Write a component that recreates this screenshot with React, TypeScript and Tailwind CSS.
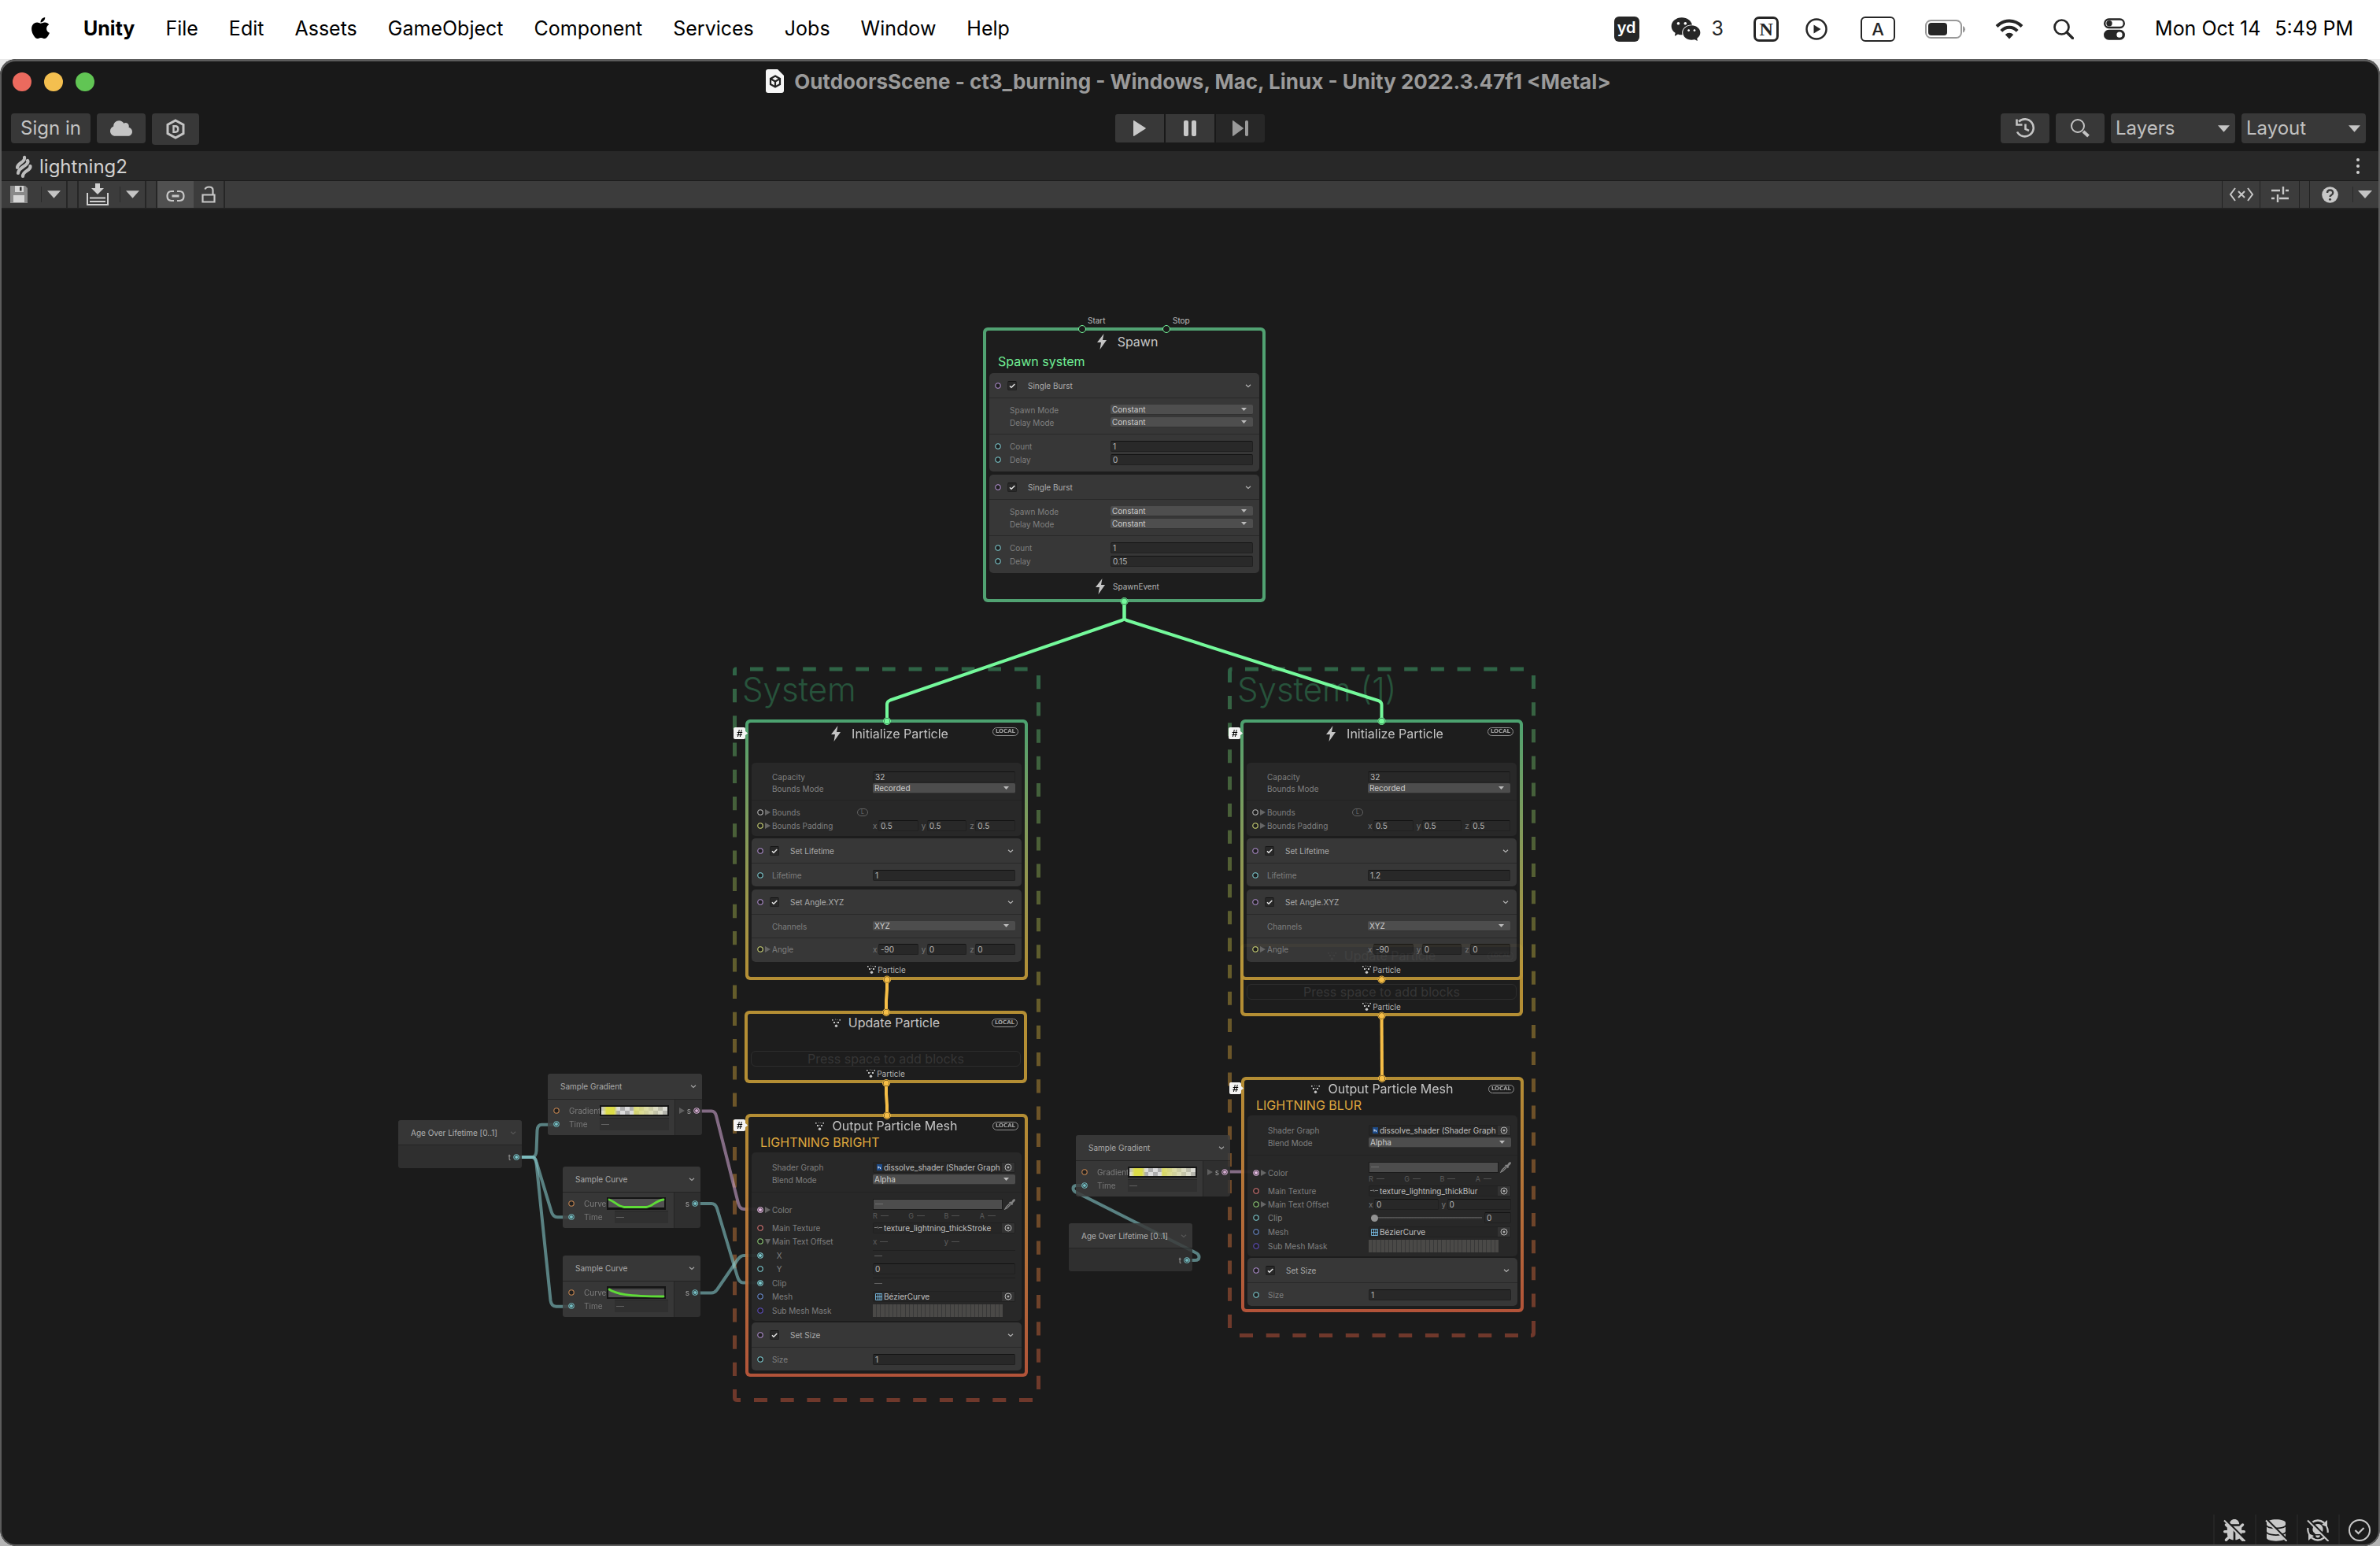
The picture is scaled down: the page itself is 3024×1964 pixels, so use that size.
import React, { useId } from "react";
import { FaApple, FaBug, FaCloud, FaDatabase } from "react-icons/fa";
import { AiFillWechat } from "react-icons/ai";

/* ---------- small drawings ---------- */

const Bolt = () => (
  <svg className="h-5 w-3 shrink-0 fill-[#cfcfcf]" viewBox="0 0 12 20">
    <path d="M8.5 0 0 11h5L3.5 20 12 8H7z" />
  </svg>
);

const Dots = () => (
  <svg className="h-[11px] w-[11px] shrink-0 fill-[#d0d0d0]" viewBox="0 0 11 11">
    <rect x="0" y="1" width="1.6" height="1.6" />
    <rect x="4" y="0.6" width="1" height="1" opacity=".7" />
    <rect x="6.4" y="1" width="1" height="1" opacity=".7" />
    <rect x="9.4" y="1" width="1.6" height="1.6" />
    <rect x="2" y="4" width="2" height="2" />
    <rect x="7" y="4" width="2" height="2" />
    <rect x="5" y="4" width="1" height="1" opacity=".6" />
    <circle cx="5.5" cy="9.2" r="1.7" />
  </svg>
);

const Chevron = ({ dim = false }: { dim?: boolean }) => (
  <svg className="h-2 w-2 shrink-0" viewBox="0 0 8 8" fill="none" stroke={dim ? "#626262" : "#bdbdbd"} strokeWidth="1.2">
    <path d="M1 2.8 4 5.4 7 2.8" />
  </svg>
);

const Fold = ({ open = false }: { open?: boolean }) => (
  <svg className="h-[8px] w-[7px] shrink-0 fill-[#6b6b6b]" viewBox="0 0 7 8">
    <path d={open ? "M0 1h7L3.5 8z" : "M0 0v8l7-4z"} />
  </svg>
);

const DownArrow = ({ className = "" }: { className?: string }) => (
  <svg className={"fill-[#c4c4c4] " + className} viewBox="0 0 16 9">
    <path d="M0 0h16L8 9z" />
  </svg>
);

const Port = ({ color, on = false }: { color: string; on?: boolean }) => (
  <svg className="h-[8px] w-[8px] shrink-0" viewBox="0 0 8 8">
    <circle cx="4" cy="4" r="3.2" fill="#202020" stroke={color} strokeWidth="1.1" />
    {on && <circle cx="4" cy="4" r="2" fill={color} />}
  </svg>
);

const PURPLE = "#b794d8";
const TEAL = "#84d6dc";
const YELLOW = "#d8e07c";
const ORANGE = "#e59a5c";
const PINK = "#f0c3ee";

/* ---------- node fields ---------- */

function Row({
  label,
  port,
  on,
  fold,
  rowClass = "h-[14px]",
  children,
}: {
  label: string;
  port?: string;
  on?: boolean;
  fold?: "open" | "closed";
  rowClass?: string;
  children?: (id: string) => React.ReactNode;
}) {
  const id = useId();
  return (
    <div className={"flex items-center pr-2 " + rowClass}>
      <span className="flex w-[26px] shrink-0 items-center gap-0.5 pl-[7px]">
        {port && <Port color={port} on={on} />}
        {fold && <Fold open={fold === "open"} />}
      </span>
      <label htmlFor={id} className="w-32 shrink-0 whitespace-pre text-[#858585]">
        {label}
      </label>
      <span className="flex min-w-0 flex-1 items-center">{children?.(id)}</span>
    </div>
  );
}

function Num({ id, value, label }: { id?: string; value: string; label?: string }) {
  return (
    <input
      id={id}
      aria-label={label}
      defaultValue={value}
      className="h-[14px] w-full min-w-0 flex-1 rounded-[2px] border border-[#212121] border-t-[#121212] bg-[#2a2a2a] px-0.5 leading-3 text-[#c0c0c0] outline-none"
    />
  );
}

function Pick({ id, value }: { id?: string; value: string }) {
  return (
    <span className="relative flex w-full">
      <select
        id={id}
        className="h-[13px] w-full appearance-none rounded-[2px] border-b border-[#333] bg-[#515151] px-0.5 leading-3 text-[#d6d6d6] outline-none"
      >
        <option>{value}</option>
      </select>
      <DownArrow className="pointer-events-none absolute top-1 right-2 h-1 w-[7px]" />
    </span>
  );
}

function Vec({ id, axes }: { id?: string; axes: [string, string][] }) {
  return (
    <span className="flex w-full gap-1">
      {axes.map(([axis, v], i) => (
        <span key={axis} className="flex flex-1 items-center text-[#7d7d7d]">
          <span className="w-[7px] shrink-0">{axis}</span>
          <Num id={i === 0 ? id : undefined} label={axis} value={v} />
        </span>
      ))}
    </span>
  );
}

const Dash = ({ id }: { id?: string }) => (
  <output id={id} className="flex h-[14px] w-full items-center border-t border-[#202020] pl-0.5">
    <span className="h-px w-[10px] bg-[#666]" />
  </output>
);

function Asset({ id, value, icon }: { id?: string; value: string; icon: React.ReactNode }) {
  return (
    <span className="flex h-[14px] w-full items-center rounded-[2px] border border-[#222] bg-[#282828]">
      <span className="flex w-[13px] shrink-0 items-center justify-end pr-0.5">{icon}</span>
      <input id={id} readOnly defaultValue={value} className="min-w-0 flex-1 bg-transparent leading-3 text-[#c8c8c8] outline-none" />
      <button aria-label="Select asset" className="flex h-3 w-4 shrink-0 items-center justify-center bg-[#353535]">
        <svg className="h-[10px] w-[10px]" viewBox="0 0 10 10" fill="none" stroke="#c4c4c4">
          <circle cx="5" cy="5" r="4" />
          <circle cx="5" cy="5" r="1" fill="#c4c4c4" />
        </svg>
      </button>
    </span>
  );
}

const ShaderIcon = () => (
  <svg className="h-[8px] w-[7px]" viewBox="0 0 7 8">
    <path d="M0 0h7v8H0z" fill="#1f4f8f" />
    <path d="M2 2.5v3M2 4h2.5v2" stroke="#e8f2ff" fill="none" />
  </svg>
);
const MeshIcon = () => (
  <svg className="h-[9px] w-[9px]" viewBox="0 0 9 9" fill="none" stroke="#7cc4ee">
    <path d="M.5.5h8v8h-8zM3.500 0v9M6 0v9M0 4.500h9" strokeWidth=".9" />
  </svg>
);
const TexIcon = () => (
  <svg className="h-[5px] w-[10px]" viewBox="0 0 10 5" fill="none" stroke="#8a8a8a">
    <path d="M0 2.5h3l1-1 1 2 1-1h4" />
  </svg>
);

function ColorField({ id }: { id?: string }) {
  return (
    <span className="flex w-full flex-col gap-0.5">
      <span className="flex items-center gap-0.5">
        <button id={id} aria-label="Color" className="flex h-[14px] flex-1 items-center border border-[#1c1c1c] bg-[#515151] pl-0.5">
          <span className="h-px w-[10px] bg-[#777]" />
        </button>
        <svg className="h-[14px] w-[14px]" viewBox="0 0 14 14">
          <path d="M7.500 3.400 9 4 10.600 1.500Q12.500-.6 13.600.6T12.800 3.400L10.600 5.400l.7 1.300-1.600 1.200L6 4.600z" fill="#8c8c8c" />
          <path d="M7 5.800 2.500 10.200 1 13l2.800-1.400L8.200 7" fill="none" stroke="#8c8c8c" strokeWidth="1.200" />
        </svg>
      </span>
      <span className="grid grid-cols-4 text-[9px] leading-3 text-[#606060]">
        {["R", "G", "B", "A"].map((c) => (
          <span key={c} className="flex items-center gap-1">
            {c}
            <span className="h-px w-[10px] bg-[#555]" />
          </span>
        ))}
      </span>
    </span>
  );
}

const Mask = ({ id }: { id?: string }) => (
  <button id={id} aria-label="Sub Mesh Mask" className="mr-4 flex h-4 flex-1 gap-px bg-[#3a3a3a]">
    {Array.from({ length: 32 }, (_, i) => (
      <span key={i} className="flex-1 bg-[#4d4c4a]" />
    ))}
  </button>
);

/* ---------- blocks and contexts ---------- */

function Block({ title, children }: { title: string; children: React.ReactNode }) {
  return (
    <section className="divide-y divide-[#2a2a2a] rounded-[5px] bg-[#393939]">
      <header className="flex h-8 items-center pr-[10px] pl-[7px]">
        <Port color={PURPLE} />
        <label className="ml-2 flex flex-1 items-center gap-[14px] text-[#b4b4b4]">
          <span className="relative flex">
            <input
              type="checkbox"
              defaultChecked
              className="h-3 w-3 appearance-none rounded-[2px] border border-[#222] border-t-[#141414] bg-[#2a2a2a]"
            />
            <svg className="pointer-events-none absolute inset-0 h-3 w-3" viewBox="0 0 12 12" fill="none" stroke="#f0f0f0" strokeWidth="1.500">
              <path d="m3 6.200 2 2L9.300 4" />
            </svg>
          </span>
          {title}
        </label>
        <Chevron />
      </header>
      {children}
    </section>
  );
}

const Local = () => (
  <span className="flex h-[11px] w-[33px] items-center justify-center rounded-full border border-[#9a9a9a] font-['DejaVu_Sans',sans-serif] text-[7px] leading-none font-bold text-[#a8a8a8]">
    LOCAL
  </span>
);

function Context({
  place,
  tint,
  title,
  icon,
  headClass,
  local = true,
  hashClass,
  subtitle,
  subClass,
  children,
  footer,
}: {
  place: string;
  tint: string;
  title: string;
  icon: React.ReactNode;
  headClass: string;
  local?: boolean;
  hashClass?: string;
  subtitle?: string;
  subClass: string;
  children: React.ReactNode;
  footer?: React.ReactNode;
}) {
  return (
    <article className={"absolute w-[359px] rounded-[6px] bg-linear-to-b p-1 text-[10px] leading-3 opacity-95 " + tint + " " + place}>
      {hashClass && (
        <span
          className={
            "absolute -left-[15px] flex h-[15px] w-[15px] items-center justify-center rounded-[2px] bg-white font-['Liberation_Sans',sans-serif] text-[13px] font-bold text-black italic " +
            hashClass
          }
        >
          #
          <svg className="absolute top-[4px] -right-[3px] h-[7px] w-[4px] fill-white" viewBox="0 0 4 7">
            <path d="M0 0v7l4-3.500z" />
          </svg>
        </span>
      )}
      <div className="rounded-[3px] bg-[#1e1e1e] px-1">
        <header className={"relative flex items-center justify-center text-[16px] text-[#cfcfcf] " + headClass}>
          {icon}
          <h2 className="font-normal">{title}</h2>
          {local && (
            <span className="absolute top-[6px] right-1">
              <Local />
            </span>
          )}
        </header>
        <p className={"pl-[11px] text-[16px] " + subClass}>{subtitle}</p>
        {children}
        {footer}
      </div>
    </article>
  );
}

const ParticleFooter = ({ h }: { h: string }) => (
  <footer className={"flex items-center justify-center gap-0.5 text-[#bdbdbd] " + h}>
    <Dots />
    Particle
  </footer>
);

function Burst({ delay }: { delay: string }) {
  return (
    <Block title="Single Burst">
      <div className="flex h-[46px] flex-col gap-[3px] pt-2">
        <Row label="Spawn Mode" rowClass="h-[13px]">{(id) => <Pick id={id} value="Constant" />}</Row>
        <Row label="Delay Mode" rowClass="h-[13px]">{(id) => <Pick id={id} value="Constant" />}</Row>
      </div>
      <div className="flex h-[47px] flex-col gap-[3px] pt-2">
        <Row label="Count" port={TEAL}>{(id) => <Num id={id} value="1" />}</Row>
        <Row label="Delay" port={TEAL}>{(id) => <Num id={id} value={delay} />}</Row>
      </div>
    </Block>
  );
}

function Initialize({ place, lifetime }: { place: string; lifetime: string }) {
  return (
    <Context
      place={place}
      tint="from-[#4faa75] to-[#bd9536]"
      title="Initialize Particle"
      icon={<Bolt />}
      headClass="h-[28px] gap-[14px] pl-2"
      hashClass="top-[10px]"
      subClass="h-[23px]"
      footer={<ParticleFooter h="h-[19px]" />}
    >
      <section className="mb-[3px] divide-y divide-[#242424] rounded-[5px] bg-[#2a2a2a]">
        <div className="flex h-12 flex-col gap-px pt-[11px]">
          <Row label="Capacity">{(id) => <Num id={id} value="32" />}</Row>
          <Row label="Bounds Mode" rowClass="h-[13px]">{(id) => <Pick id={id} value="Recorded" />}</Row>
        </div>
        <div className="flex h-[45px] flex-col gap-[3px] pt-2">
          <div className="flex items-center">
            <Row label="Bounds" port="#c4c4c4" fold="closed" />
            <span className="-ml-7 flex h-[10px] w-[14px] items-center justify-center rounded-full border border-[#666] text-[7px] text-[#777]">
              L
            </span>
          </div>
          <Row label="Bounds Padding" port={YELLOW} fold="closed">
            {(id) => <Vec id={id} axes={[["x", "0.5"], ["y", "0.5"], ["z", "0.5"]]} />}
          </Row>
        </div>
      </section>
      <div className="flex flex-col gap-1">
        <Block title="Set Lifetime">
          <div className="flex h-[29px] flex-col pt-2">
            <Row label="Lifetime" port={TEAL}>{(id) => <Num id={id} value={lifetime} />}</Row>
          </div>
        </Block>
        <Block title="Set Angle.XYZ">
          <div className="flex h-[30px] flex-col pt-2">
            <Row label="Channels" rowClass="h-[13px]">{(id) => <Pick id={id} value="XYZ" />}</Row>
          </div>
          <div className="flex h-[30px] flex-col pt-[7px]">
            <Row label="Angle" port={YELLOW} fold="closed">
              {(id) => <Vec id={id} axes={[["x", "-90"], ["y", "0"], ["z", "0"]]} />}
            </Row>
          </div>
        </Block>
      </div>
    </Context>
  );
}

function Update({ place }: { place: string }) {
  return (
    <Context
      place={place}
      tint="from-[#bd9536] to-[#bd9536]"
      title="Update Particle"
      icon={<Dots />}
      headClass="h-[22px] gap-[10px]"
      subClass="h-[25px]"
      footer={<ParticleFooter h="h-[17px]" />}
    >
      <p className="flex h-5 items-center justify-center rounded-[6px] border border-[#2e2e2e] text-[16px] text-[#383838]">
        Press space to add blocks
      </p>
    </Context>
  );
}

function Output({ place, subtitle, texture, linked }: { place: string; subtitle: string; texture: string; linked?: boolean }) {
  return (
    <Context
      place={place}
      tint="from-[#bd9536] to-[#bb573b]"
      title="Output Particle Mesh"
      icon={<Dots />}
      headClass="h-[22px] gap-[10px]"
      hashClass="top-[7px]"
      subtitle={subtitle}
      subClass="h-[23px] leading-5 text-[#e8b040]"
    >
      <section className="mb-0.5 divide-y divide-[#242424] rounded-[5px] bg-[#2a2a2a]">
        <div className="flex h-[51px] flex-col gap-0.5 pt-3">
          <Row label="Shader Graph">
            {(id) => <Asset id={id} value="dissolve_shader (Shader Graph Vfx Asset)" icon={<ShaderIcon />} />}
          </Row>
          <Row label="Blend Mode" rowClass="h-[13px]">{(id) => <Pick id={id} value="Alpha" />}</Row>
        </div>
        <div className="flex flex-col pt-[7px] pb-[5px]">
          <Row label="Color" port={PINK} on fold="closed" rowClass="h-[29px]">{(id) => <ColorField id={id} />}</Row>
          <Row label="Main Texture" port="#e07a7a" rowClass="h-[17px]">
            {(id) => <Asset id={id} value={texture} icon={<TexIcon />} />}
          </Row>
          {linked ? (
            <>
              <Row label="Main Text Offset" port="#96d67c" fold="open" rowClass="h-[18px]">
                {(id) => (
                  <span id={id} className="flex w-full text-[#606060]">
                    <span className="flex flex-1 items-center gap-1">x<span className="h-px w-[10px] bg-[#555]" /></span>
                    <span className="flex flex-1 items-center gap-1">y<span className="h-px w-[10px] bg-[#555]" /></span>
                  </span>
                )}
              </Row>
              <Row label={"  X"} port={TEAL} on rowClass="h-[17px]">{(id) => <Dash id={id} />}</Row>
              <Row label={"  Y"} port={TEAL} rowClass="h-[18px]">{(id) => <Num id={id} value="0" />}</Row>
              <Row label="Clip" port={TEAL} on rowClass="h-[17px]">{(id) => <Dash id={id} />}</Row>
            </>
          ) : (
            <>
              <Row label="Main Text Offset" port="#96d67c" fold="closed" rowClass="h-[17px]">
                {(id) => <Vec id={id} axes={[["x", "0"], ["y", "0"]]} />}
              </Row>
              <Row label="Clip" port={TEAL} rowClass="h-[18px]">
                {(id) => (
                  <span className="flex w-full items-center gap-[3px]">
                    <input
                      id={id}
                      type="range"
                      defaultValue={0}
                      className="ml-[3px] h-[9px] min-w-0 flex-1 appearance-none bg-linear-to-b from-transparent from-35% via-[#5e5e5e] via-35% to-transparent to-65% [&::-webkit-slider-thumb]:h-[9px] [&::-webkit-slider-thumb]:w-[9px] [&::-webkit-slider-thumb]:appearance-none [&::-webkit-slider-thumb]:rounded-full [&::-webkit-slider-thumb]:bg-[#999]"
                    />
                    <span className="flex w-[34px]">
                      <Num label="Clip value" value="0" />
                    </span>
                  </span>
                )}
              </Row>
            </>
          )}
          <Row label="Mesh" port="#6f92d8" rowClass="h-[18px]">
            {(id) => <Asset id={id} value="BézierCurve" icon={<MeshIcon />} />}
          </Row>
          <Row label="Sub Mesh Mask" port="#6350c8" rowClass="h-[17px]">{(id) => <Mask id={id} />}</Row>
        </div>
      </section>
      <Block title="Set Size">
        <div className="flex h-[29px] flex-col pt-2">
          <Row label="Size" port={TEAL}>{(id) => <Num id={id} value="1" />}</Row>
        </div>
      </Block>
      <div className="h-1" />
    </Context>
  );
}

/* ---------- operators ---------- */

function Age({ place }: { place: string }) {
  return (
    <article className={"absolute w-[157px] overflow-hidden rounded-[3px] text-[10px] leading-3 opacity-85 " + place}>
      <header className="flex h-8 items-center justify-between border-b border-[#262626] bg-[#3c3c3c] pr-[7px] pl-4 whitespace-nowrap text-[#cacaca]">
        Age Over Lifetime [0..1] <Chevron dim />
      </header>
      <div className="flex h-[29px] items-center justify-end gap-[3px] bg-[#333] pr-[3px] text-[#b8b8b8]">
        t <Port color={TEAL} on />
      </div>
    </article>
  );
}

function Sample({
  place,
  title,
  label,
  leftClass,
  preview,
  fold,
  out,
}: {
  place: string;
  title: string;
  label: string;
  leftClass: string;
  preview: React.ReactNode;
  fold?: boolean;
  out: string;
}) {
  return (
    <article className={"absolute overflow-hidden rounded-[3px] text-[10px] leading-3 opacity-85 " + place}>
      <header className="flex h-[33px] items-center justify-between border-b border-[#262626] bg-[#3d3d3d] pr-[7px] pl-4 text-[#c2c2c2]">
        {title} <Chevron />
      </header>
      <div className="flex h-[45px]">
        <div className={"flex flex-col gap-[3px] border-r border-[#262626] bg-[#3d3d3d] pt-[7px] pr-[7px] " + leftClass}>
          <div className="flex h-[14px] items-center">
            <span className="w-[27px] shrink-0 pl-[7px]">
              <Port color={ORANGE} />
            </span>
            <span className="w-0 flex-1 text-[#909090]">{label}</span>
            {preview}
          </div>
          <div className="flex h-[14px] items-center">
            <span className="w-[27px] shrink-0 pl-[7px]">
              <Port color={TEAL} on />
            </span>
            <span className="w-[39px] text-[#8a8a8a] last:w-auto">Time</span>
            <span className="flex h-4 flex-1 items-center border-t border-[#2a2a2a] bg-[#343434] pl-0.5">
              <span className="h-px w-[10px] bg-[#707070]" />
            </span>
          </div>
        </div>
        <div className="flex flex-1 justify-end bg-[#333] pt-2 pr-[3px]">
          <span className="flex h-3 items-center gap-[3px] text-[#b8b8b8]">
            {fold && <Fold />}s <Port color={out} on />
          </span>
        </div>
      </div>
    </article>
  );
}

function GradientPreview({ second }: { second?: boolean }) {
  const id = useId();
  return (
    <svg className="h-[14px] w-[88px] shrink-0" viewBox="0 0 88 14">
      <defs>
        <linearGradient id={id}>
          <stop offset="0" stopColor="#fff" stopOpacity=".3" />
          <stop offset=".08" stopColor="#ffff50" />
          <stop offset=".19" stopColor="#ffff50" />
          <stop offset=".25" stopColor="#ffff80" stopOpacity="0" />
          <stop offset=".47" stopColor="#fff" stopOpacity="0" />
          <stop offset=".5" stopColor="#ffff66" stopOpacity={second ? 0.95 : 0.8} />
          <stop offset=".68" stopColor="#ffffb0" stopOpacity=".8" />
          <stop offset="1" stopColor="#ffffd0" stopOpacity=".1" />
        </linearGradient>
      </defs>
      <rect width="88" height="14" fill="#161616" />
      <rect x="2" y="2" width="84" height="10" fill="#fff" />
      {Array.from({ length: 14 }, (_, i) => (
        <rect key={i} x={2 + i * 6} y={i % 2 ? 7 : 2} width="6" height="5" fill="#c8c8c8" />
      ))}
      <rect x="2" y="2" width="84" height="10" fill={"url(#" + id + ")"} />
    </svg>
  );
}

const CurvePreview = ({ d, base }: { d: string; base: number }) => (
  <svg className="mr-[3px] h-4 w-[75px] shrink-0" viewBox="0 0 75 16">
    <rect width="75" height="16" fill="#141414" />
    <rect x="2" y="2" width="71" height="12" fill="#5c5c5c" />
    <path d={"M2 " + base + "h71"} stroke="#080808" />
    <path d={d} fill="none" stroke="#6bff3d" strokeWidth="2.800" strokeLinecap="round" />
  </svg>
);

/* ---------- canvas ---------- */

const edge = "fill-none stroke-[4]";

function Graph() {
  return (
    <main className="relative flex-1 overflow-hidden bg-[#1b1b1b]">
      <svg className="absolute inset-0 h-full w-full" aria-hidden="true">
        <defs>
          <linearGradient id="groupA" gradientUnits="userSpaceOnUse" x1="0" y1="848" x2="0" y2="1781">
            <stop offset="0" stopColor="#2f6446" />
            <stop offset=".45" stopColor="#655c2a" />
            <stop offset=".62" stopColor="#6e5428" />
            <stop offset="1" stopColor="#6f382b" />
          </linearGradient>
          <linearGradient id="groupB" gradientUnits="userSpaceOnUse" x1="0" y1="848" x2="0" y2="1699">
            <stop offset="0" stopColor="#2f6446" />
            <stop offset=".45" stopColor="#655c2a" />
            <stop offset=".62" stopColor="#6e5428" />
            <stop offset="1" stopColor="#6f382b" />
          </linearGradient>
        </defs>
        <g transform="translate(0 -266)">
          <g fill="none" strokeWidth="5" strokeDasharray="17 17">
            <path d="M936 850h-1q-1.500 0-1.500 2v6" stroke="#2f6446" strokeDasharray="none" />
            <path d="M953 850H1310" stroke="#2f6446" strokeDasharray="16.600 17" />
            <path d="M933.500 875V1757" stroke="url(#groupA)" strokeDasharray="17.300 16.930" />
            <path d="M1319.500 858V1765" stroke="url(#groupA)" strokeDasharray="17.200 17.020" />
            <path d="M958 1778.500H1313" stroke="#6f382b" strokeDasharray="17 16.700" />
            <path d="M933.500 1765v11q0 2.500 3 2.500h4.500" stroke="#6f382b" strokeDasharray="none" />
            <path d="M1562.500 867v-14q0-3 3-3" stroke="#2f6446" strokeDasharray="none" />
            <path d="M1582 850H1938" stroke="#2f6446" strokeDasharray="17 16.700" />
            <path d="M1562.500 884V1688" stroke="url(#groupB)" strokeDasharray="17 17.170" />
            <path d="M1948.500 858V1670" stroke="url(#groupB)" strokeDasharray="17 17.150" />
            <path d="M1575 1696.500H1930" stroke="#6f382b" strokeDasharray="17 16.700" />
            <path d="M1948.500 1678v16q0 2.500-3.500 2.500" stroke="#6f382b" strokeDasharray="none" />
          </g>
        </g>
      </svg>

      <h1 className="absolute top-[586px] left-[943px] text-[42px] leading-[48px] font-light text-[#27533b]">System</h1>
      <h1 className="absolute top-[586px] left-[1572px] text-[42px] leading-[48px] font-light text-[#27533b]">System (1)</h1>

      <svg className="absolute inset-0 h-full w-full" aria-hidden="true">
        <g transform="translate(0 -266)">
          <g className={edge} stroke="#74f99b">
            <path d="M1428.500 764V785q0 2-3 3L1131 889.500q-4 1.500-4 5.500V916" />
            <path d="M1428.500 764V785q0 2 3 3L1751 890q4.500 1.500 4.500 5.500V916" />
          </g>
          <g className={edge} stroke="#f6be47">
            <path d="M1127 1244v13l-1 14v15" />
            <path d="M1126 1376v14l1 14v13" />
            <path d="M1755.500 1290 1756 1370" />
          </g>
          <g className={edge} stroke="#84c6c8" strokeOpacity=".6">
            <path d="M656 1470h20q5 0 5.500-8l1-26q.5-7.300 6-7.300H707" />
            <path d="M656 1470h20q4 0 5.500 6l19 63q2 7.300 8 7.300H726" />
            <path d="M656 1470h20q4.500 0 5.500 8l18 174q1 7.700 7 7.700H726" />
            <path d="M883 1529h21q5 0 7 6l26 87q2.500 7.500 7 7.500h22" />
            <path d="M883 1642.500h21q4 0 7-4l26-38q4-5.500 8-5.500h21" />
            <path d="M1509 1601h9q5.500 0 5.500-4t-5-6L1366 1514q-2.500-1.500-2.500-4.500t4-3.500h10" />
          </g>
          <g className={edge} stroke="#c9a2cc" strokeOpacity=".6">
            <path d="M885 1411.500h19q4.500 0 6 6l28 111q2 7.500 7 7.500h21" />
            <path d="M1556 1488.500H1596" />
          </g>
        </g>
      </svg>

      <Context
        place="top-[150px] left-[1249px]"
        tint="from-[#54aa77] to-[#54aa77]"
        title="Spawn"
        icon={<Bolt />}
        headClass="h-[28px] gap-[14px] pl-2"
        local={false}
        subtitle="Spawn system"
        subClass="h-[26px] leading-[22px] text-[#74f99b]"
        footer={
          <footer className="flex h-[33px] items-center justify-center gap-[10px] pl-2 text-[#bdbdbd]">
            <Bolt />
            SpawnEvent
          </footer>
        }
      >
        <div className="flex flex-col gap-1">
          <Burst delay="0" />
          <Burst delay="0.15" />
        </div>
      </Context>
      <span className="absolute top-[133px] left-[1382px] text-[10px]/4 text-[#bdbdbd]">Start</span>
      <span className="absolute top-[133px] left-[1490px] text-[10px]/4 text-[#bdbdbd]">Stop</span>

      <Initialize place="top-[648px] left-[947px]" lifetime="1" />
      <Update place="top-[1018px] left-[946px]" />
      <Output place="top-[1149px] left-[947px]" subtitle="LIGHTNING BRIGHT" texture="texture_lightning_thickStroke" linked />

      <Update place="top-[933px] left-[1576px]" />
      <Initialize place="top-[648px] left-[1576px]" lifetime="1.2" />
      <Output place="top-[1102px] left-[1577px]" subtitle="LIGHTNING BLUR" texture="texture_lightning_thickBlur" />

      <Age place="top-[1157px] left-[506px]" />
      <Sample place="top-[1098px] left-[696px] w-[196px]" title="Sample Gradient" label="Gradient" leftClass="w-[162px]" preview={<GradientPreview />} fold out={PINK} />
      <Sample
        place="top-[1216px] left-[715px] w-[175px]"
        title="Sample Curve"
        label="Curve"
        leftClass="w-[142px]"
        preview={<CurvePreview base={13.5} d="M3 3C10 5 14 12 22 12.500H50C58 12 62 4 72 3" />}
        out={TEAL}
      />
      <Sample
        place="top-[1329px] left-[715px] w-[175px]"
        title="Sample Curve"
        label="Curve"
        leftClass="w-[142px]"
        preview={<CurvePreview base={3} d="M3 4C12 10 26 12.500 72 13" />}
        out={TEAL}
      />
      <Sample place="top-[1176px] left-[1367px] w-[196px]" title="Sample Gradient" label="Gradient" leftClass="w-[162px]" preview={<GradientPreview second />} fold out={PINK} />
      <Age place="top-[1288px] left-[1358px]" />

      <svg className="pointer-events-none absolute inset-0 h-full w-full" aria-hidden="true">
        <g transform="translate(0 -266)">
          {[[1375, 418], [1482, 418]].map(([x, y]) => (
            <circle key={x} cx={x} cy={y} r="4.500" fill="#1b1b1b" stroke="#74f99b" strokeWidth="1" />
          ))}
          {[[1428.5, 764], [1127, 916], [1755.5, 916]].map(([x, y]) => (
            <g key={x}>
              <circle cx={x} cy={y} r="4.500" fill="#1b3a28" stroke="#74f99b" strokeWidth="1" />
              <circle cx={x} cy={y} r="3.500" fill="#74f99b" />
            </g>
          ))}
          {[[1127, 1244.5], [1126, 1286], [1126, 1376], [1127, 1417], [1755.5, 1244.5], [1755.5, 1290.5], [1756, 1370]].map(([x, y]) => (
            <g key={x + "-" + y}>
              <circle cx={x} cy={y} r="4.500" fill="#3a2c10" stroke="#f6be47" strokeWidth="1" />
              <circle cx={x} cy={y} r="3.500" fill="#f6be47" />
            </g>
          ))}
        </g>
      </svg>
    </main>
  );
}

/* ---------- menu bar and window chrome ---------- */

function MenuBar() {
  return (
    <header className="flex h-[75px] shrink-0 items-center justify-between bg-white pr-[34px] pl-9 pb-px text-[25px] text-black">
      <nav className="flex items-center gap-[39px]">
        <button aria-label="Apple" className="mb-1 text-[31px]">
          <FaApple />
        </button>
        <button className="font-bold">Unity</button>
        {["File", "Edit", "Assets", "GameObject", "Component", "Services", "Jobs", "Window", "Help"].map((m) => (
          <button key={m}>{m}</button>
        ))}
      </nav>
      <div className="flex items-center gap-[38px] text-[#262626]">
        <span className="flex h-8 w-8 items-center justify-center rounded-[6px] bg-[#262626] pb-1 text-[20px] font-semibold text-white">yd</span>
        <span className="flex items-center gap-3">
          <AiFillWechat className="h-[42px] w-[42px]" />3
        </span>
        <span className="flex h-8 w-8 items-center justify-center rounded-[7px] border-[3px] border-[#262626] font-['Liberation_Serif',serif] text-[24px] font-bold">
          N
        </span>
        <svg className="mr-1 -ml-1 h-7 w-7" viewBox="0 0 28 28" fill="none" stroke="#262626" strokeWidth="2.500">
          <circle cx="14" cy="14" r="12.500" />
          <path d="M10.500 8.500v11l9-5.500z" fill="#262626" stroke="none" />
        </svg>
        <span className="flex h-8 w-11 items-center justify-center rounded-[6px] border-2 border-[#262626] text-[22px] font-medium">A</span>
        <svg className="h-[25px] w-[51px]" viewBox="0 0 51 25">
          <rect x="1" y="1" width="45" height="22" rx="6.500" fill="none" stroke="#999" strokeWidth="2" />
          <rect x="4" y="4" width="24" height="16" rx="4" fill="#262626" />
          <path d="M48 8q3 1.500 3 4.300T48 16.500z" fill="#999" />
        </svg>
        <svg className="h-[26px] w-[36px]" viewBox="0 0 36 26" fill="none" stroke="#262626" strokeWidth="4">
          <path d="M2 9.500Q9 2.500 18 2.500t16 7" />
          <path d="M7.800 15.300Q12 10.800 18 10.800t10.200 4.500" />
          <path d="M18 25.500 12.800 20Q15 17.800 18 17.800t5.200 2.200z" fill="#262626" stroke="none" />
        </svg>
        <svg className="h-[26px] w-[26px]" viewBox="0 0 26 26" fill="none" stroke="#262626" strokeWidth="2.700">
          <circle cx="10.500" cy="10.500" r="9" />
          <path d="m17 17 7.500 7.500" strokeWidth="3.400" strokeLinecap="round" />
        </svg>
        <svg className="h-[28px] w-[27px]" viewBox="0 0 27 28" fill="none" stroke="#262626" strokeWidth="2.400">
          <rect x="1.200" y="1.500" width="24.600" height="10.500" rx="5.200" />
          <circle cx="7" cy="6.700" r="2.500" fill="#262626" />
          <rect x="1.200" y="16" width="24.600" height="10.500" rx="5.200" fill="#262626" />
          <circle cx="20" cy="21.200" r="3.600" fill="#fff" stroke="none" />
        </svg>
        <time className="flex gap-[18px] whitespace-nowrap text-black">
          <span>Mon Oct 14</span>
          <span>5:49 PM</span>
        </time>
      </div>
    </header>
  );
}

const tool = "flex h-[38px] items-center justify-center rounded-[4px] bg-[#383838] text-[#c4c4c4]";

function Dropdown({ value }: { value: string }) {
  return (
    <span className="relative flex">
      <select aria-label={value} className="h-[38px] w-[158px] appearance-none rounded-[4px] bg-[#383838] px-[6px] text-[24px] text-[#c0c0c0] outline-none">
        <option>{value}</option>
      </select>
      <DownArrow className="pointer-events-none absolute top-[15px] right-[7px] h-[9px] w-[15px]" />
    </span>
  );
}

function Chrome() {
  return (
    <>
      <div className="relative flex h-[58px] shrink-0 items-center justify-center bg-[#191919]">
        <div className="absolute left-4 flex gap-4">
          <button aria-label="Close" className="h-6 w-6 rounded-full bg-[#ec6a5e]" />
          <button aria-label="Minimize" className="h-6 w-6 rounded-full bg-[#f4bf4f]" />
          <button aria-label="Zoom" className="h-6 w-6 rounded-full bg-[#61c554]" />
        </div>
        <div className="flex items-center gap-3 pr-1 pb-0.5">
          <svg className="h-[30px] w-[24px]" viewBox="0 0 24 30">
            <path d="M3 0h12l8 8v19q0 3-3 3H3q-3 0-3-3V3Q0 0 3 0z" fill="#f6f6f6" />
            <path d="m12 8.500 6 3.500v7l-6 3.500L6 19v-7z" fill="none" stroke="#222" strokeWidth="2.200" />
            <path d="M12 15.500v7M12 15.500 6 12M12 15.500l6-3.500" stroke="#222" strokeWidth="2.200" />
          </svg>
          <h1 className="text-[26px] font-bold text-[#9a9a9a]">OutdoorsScene - ct3_burning - Windows, Mac, Linux - Unity 2022.3.47f1 &lt;Metal&gt;</h1>
        </div>
      </div>

      <div className="grid h-[59px] shrink-0 grid-cols-[1fr_auto_1fr] items-center bg-[#191919] px-[14px]">
        <div className="flex items-center gap-2">
          <button className={tool + " w-[101px] text-[24px]"}>Sign in</button>
          <button aria-label="Cloud" className={tool + " w-[62px] text-[28px]"}>
            <FaCloud />
          </button>
          <button aria-label="DevOps" className="mt-[3px] flex h-10 w-[60px] items-center justify-center rounded-[4px] bg-[#383838]">
            <svg className="h-[26px] w-[26px]" viewBox="0 0 26 26" fill="none" stroke="#c4c4c4" strokeWidth="3">
              <path d="m13 2 10 5.500v11L13 24 3 18.500v-11z" />
              <path d="M10.500 9.300h2.300q3.500 0 3.500 3.700t-3.500 3.700h-2.300z" strokeWidth="2.400" />
            </svg>
          </button>
        </div>
        <div className="flex gap-0.5">
          <button aria-label="Play" className="flex h-9 w-[62px] items-center justify-center rounded-l-[3px] bg-[#383838]">
            <svg className="h-5 w-4 fill-[#c8c8c8]" viewBox="0 0 16 20"><path d="M0 1q0-1.500 1.500-.600L15.500 9.500q.8.500 0 1L1.500 19.600Q0 20.500 0 19z" /></svg>
          </button>
          <button aria-label="Pause" className="flex h-9 w-[62px] items-center justify-center bg-[#383838]">
            <svg className="h-5 w-4 fill-[#c8c8c8]" viewBox="0 0 16 20"><rect width="6" height="20" rx="2" /><rect x="10" width="6" height="20" rx="2" /></svg>
          </button>
          <button aria-label="Step" className="flex h-9 w-[62px] items-center justify-center rounded-r-[3px] bg-[#272727]">
            <svg className="h-5 w-5 fill-[#9a9a9a]" viewBox="0 0 20 20"><path d="M0 1q0-1.500 1.300-.6L13.600 9.500q.6.500 0 1L1.300 19.600Q0 20.500 0 19z" /><rect x="16" width="4" height="20" rx="1.800" /></svg>
          </button>
        </div>
        <div className="flex items-center justify-end gap-2 pr-1">
          <button aria-label="Undo history" className={tool + " w-[62px]"}>
            <svg className="h-[26px] w-[26px]" viewBox="0 0 26 26" fill="none" stroke="#c4c4c4" strokeWidth="2.600">
              <path d="M5 4.500A11 11 0 1 1 3 17.500" />
              <path d="M2.500 1.500V8.500H9.500M13.500 7.500V14l4.500 2" />
            </svg>
          </button>
          <button aria-label="Search" className={tool + " w-[62px]"}>
            <svg className="h-[26px] w-[26px]" viewBox="0 0 26 26" fill="none" stroke="#c4c4c4" strokeWidth="2">
              <circle cx="10" cy="10" r="8" />
              <path d="m17 17 6.500 6" strokeWidth="4" />
            </svg>
          </button>
          <Dropdown value="Layers" />
          <Dropdown value="Layout" />
        </div>
      </div>

      <div className="flex h-[38px] shrink-0 items-center justify-between border-b border-[#1c1c1c] bg-[#282828] pr-[26px] pl-[18px]">
        <h2 className="flex items-center gap-2 pt-0.5 text-[24px] text-[#d2d2d2]">
          <svg className="h-[30px] w-[24px]" viewBox="0 0 24 30" fill="none" stroke="#bdbdbd" strokeWidth="4.200" strokeLinecap="round">
            <path d="M13 3Q14 6 9 9.500T4 16" />
            <path d="M17 7Q19 10 12 14.500T5 23" />
            <path d="M20.500 14Q21 17 16 20T11 27" />
          </svg>
          lightning2
        </h2>
        <button aria-label="More" className="flex flex-col gap-1">
          <span className="h-1 w-1 rounded-full bg-[#d0d0d0]" />
          <span className="h-1 w-1 rounded-full bg-[#d0d0d0]" />
          <span className="h-1 w-1 rounded-full bg-[#d0d0d0]" />
        </button>
      </div>

      <div className="flex h-[36px] shrink-0 justify-between border-b-2 border-[#222] bg-[#3c3c3c] pr-1">
        <div className="flex items-stretch">
          <button aria-label="Save" className="flex w-[52px] items-center pl-[13px]">
            <svg className="h-[22px] w-[22px]" viewBox="0 0 22 22">
              <path d="M0 0h19l3 3v19H0z" fill="#8a8a8a" />
              <path d="M6 0h11v8H6zM4 12h14v9H4z" fill="#d6d6d6" />
              <path d="M12 1.500h2.500v5H12z" fill="#333" />
            </svg>
          </button>
          <button aria-label="Save options" className="my-[7px] flex w-8 items-center justify-center border-l border-[#2a2a2a]">
            <DownArrow className="h-3 w-[17px]" />
          </button>
          <span className="w-4 border-x-2 border-[#262626]" />
          <button aria-label="Compile" className="flex w-[52px] items-center justify-center pr-1">
            <svg className="h-[28px] w-[28px]" viewBox="0 0 28 28">
              <path d="M11 0h6v6h5l-8 8-8-8h5z" fill="#d0d0d0" />
              <path d="M1 12v15h26V12M4 18.500h20M4 23h20" fill="none" stroke="#d0d0d0" strokeWidth="2" />
            </svg>
          </button>
          <button aria-label="Compile options" className="my-[7px] flex w-8 items-center justify-center border-l border-[#2a2a2a]">
            <DownArrow className="h-3 w-[17px]" />
          </button>
          <span className="w-4 border-x-2 border-[#262626]" />
          <button aria-label="Link" className="flex w-[46px] items-center justify-center bg-[#505050]">
            <svg className="mt-1 h-4 w-6" viewBox="0 0 24 16" fill="none" stroke="#c8c8c8" strokeWidth="2.200">
              <path d="M10 2H7Q1.500 2 1.500 8T7 14h3M14 2h3q5.500 0 5.500 6T17 14h-3" />
              <path d="M7.500 8h9" strokeWidth="3" />
            </svg>
          </button>
          <button aria-label="Lock" className="flex w-10 items-center justify-center border-r-2 border-[#262626]">
            <svg className="h-[22px] w-[18px]" viewBox="0 0 18 22" fill="none" stroke="#c8c8c8" strokeWidth="2.200">
              <path d="M1.500 11.500h15v9h-15z" />
              <path d="M14.500 11V5.500Q14.500 1.500 9.500 1.500 5.500 1.500 4.500 4.500" />
            </svg>
          </button>
        </div>
        <div className="flex items-stretch">
          <button aria-label="Blackboard" className="flex w-[48px] items-center justify-center border-l border-[#222]">
            <svg className="h-[18px] w-8" viewBox="0 0 32 18" fill="none" stroke="#c8c8c8" strokeWidth="2">
              <path d="M8 1 2 9l6 8M24 1l6 8-6 8M12 5l8 8M20 5l-8 8" />
            </svg>
          </button>
          <button aria-label="Control panel" className="flex w-[50px] items-center justify-center border-l border-[#222]">
            <svg className="h-[20px] w-[22px]" viewBox="0 0 22 20" fill="none" stroke="#c8c8c8" strokeWidth="2.400">
              <path d="M0 5h11M18 5h4M15 0v10M0 15h4M10 15h12M8 10v10" />
            </svg>
          </button>
          <span className="w-[14px] border-x border-[#222]" />
          <button aria-label="Help" className="flex w-[54px] items-center justify-center pr-1">
            <svg className="h-[21px] w-[21px]" viewBox="0 0 21 21">
              <circle cx="10.500" cy="10.500" r="10.300" fill="#c8c8c8" />
              <path d="M7 8q0-3.500 3.600-3.500T14.200 8q0 1.800-2 2.800-1.700.8-1.700 2.200" fill="none" stroke="#3c3c3c" strokeWidth="2.400" />
              <circle cx="10.500" cy="16.300" r="1.500" fill="#3c3c3c" />
            </svg>
          </button>
          <button aria-label="Help options" className="my-[7px] flex w-[31px] items-center justify-center border-l border-[#2a2a2a]">
            <DownArrow className="h-3 w-[18px]" />
          </button>
        </div>
      </div>
    </>
  );
}

const Slash = () => (
  <svg className="absolute inset-0 h-7 w-7" viewBox="0 0 28 28" fill="none">
    <path d="M2 0 29 27" stroke="#1b1b1b" strokeWidth="2.500" />
    <path d="M1 1.500 27.500 28" stroke="#c8c8c8" strokeWidth="2" />
  </svg>
);

function StatusBar() {
  const cell = "flex w-[53px] items-start justify-center border-l-2 border-[#242424] pt-[6px] pr-0.5";
  return (
    <footer className="flex h-10 shrink-0 justify-end bg-[#1b1b1b] text-[#c8c8c8]">
      <button aria-label="Debug" className={cell}>
        <span className="relative h-7 w-7"><FaBug className="h-7 w-7" /><Slash /></span>
      </button>
      <button aria-label="Cache" className={cell}>
        <span className="relative flex h-7 w-7 justify-center"><FaDatabase className="h-7 w-6" /><Slash /></span>
      </button>
      <button aria-label="Auto generate lighting" className={cell}>
        <span className="relative h-7 w-7">
          <svg className="h-7 w-7" viewBox="0 0 28 28">
            <path d="M14 6a6.500 6.500 0 0 1 3.500 12v1h-7v-1A6.500 6.500 0 0 1 14 6zM11 20.500h6q-.5 3-3 3t-3-3z" fill="#c8c8c8" />
            <path d="M6 4.500Q14-1.500 22 4.500M22 23.500Q14 29.500 6 23.500M1.500 11q-.8 4 1.500 8M26.500 17q.8-4-1.500-8" fill="none" stroke="#c8c8c8" strokeWidth="2.200" />
            <path d="M26 1v9l-7-3zM2 27v-9l7 3z" fill="#c8c8c8" />
          </svg>
          <Slash />
        </span>
      </button>
      <button aria-label="Progress" className={cell}>
        <svg className="h-7 w-7" viewBox="0 0 28 28" fill="none" stroke="#c8c8c8" strokeWidth="2">
          <circle cx="14" cy="14" r="13" />
          <path d="m8.500 14 4 4 7-7" strokeWidth="2.200" />
        </svg>
      </button>
    </footer>
  );
}

export default function App() {
  return (
    <div className="flex h-screen w-full flex-col bg-[#b4b4b4] font-[Inter,sans-serif]">
      <MenuBar />
      <div className="relative flex min-h-0 flex-1 flex-col overflow-hidden rounded-b-[20px] bg-[#e8e8e8]">
        <div className="relative flex min-h-0 flex-1 flex-col overflow-hidden rounded-[20px]">
          <Chrome />
          <Graph />
          <StatusBar />
          <div className="pointer-events-none absolute inset-0 rounded-[20px] border-2 border-t-[3px] border-[#5c5c5c]" />
        </div>
      </div>
    </div>
  );
}
